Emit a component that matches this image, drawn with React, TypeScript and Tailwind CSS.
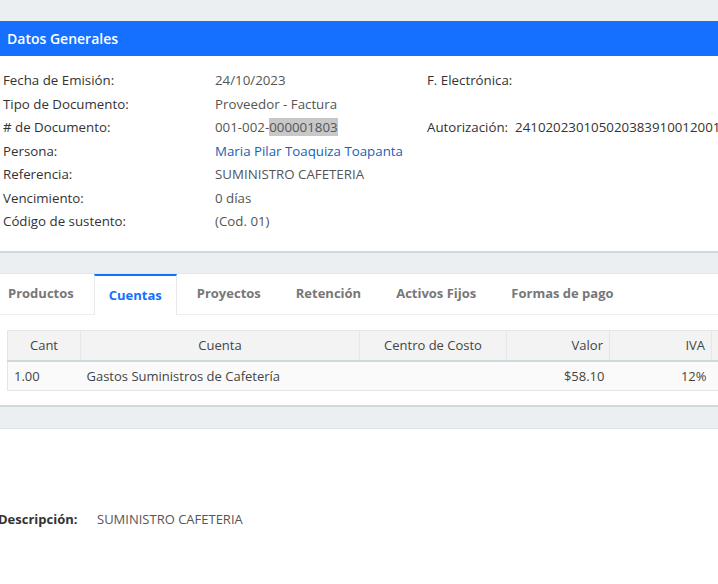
import React from 'react';

const rows: { label: string; value: React.ReactNode; extra?: React.ReactNode }[] = [
  { label: 'Fecha de Emisión:', value: '24/10/2023', extra: <span className="text-[#333]">F. Electrónica:</span> },
  { label: 'Tipo de Documento:', value: 'Proveedor - Factura' },
  {
    label: '# de Documento:',
    value: (
      <span>
        001-002-<span className="bg-[#c8c8c8]">000001803</span>
      </span>
    ),
    extra: (
      <span className="text-[#333]">
        Autorización:<span className="ml-[7px]">2410202301050203839100120010020000018031234567811</span>
      </span>
    ),
  },
  { label: 'Persona:', value: <span className="text-[#1a5fb4]">Maria Pilar Toaquiza Toapanta</span> },
  { label: 'Referencia:', value: 'SUMINISTRO CAFETERIA' },
  { label: 'Vencimiento:', value: '0 días' },
  { label: 'Código de sustento:', value: '(Cod. 01)' },
];

const tabs = ['Productos', 'Cuentas', 'Proyectos', 'Retención', 'Activos Fijos', 'Formas de pago'];

const App: React.FC = () => {
  return (
    <div className="w-[718px] h-[584px] overflow-hidden bg-white font-['Open_Sans',sans-serif] text-[13px] text-[#555]">
      <div className="h-[21px] bg-[#eceff1]" />
      <div className="h-[35px] bg-[#1570ff] px-[7px] flex items-center text-white font-semibold text-[14px]">
        Datos Generales
      </div>

      <div className="pt-[13px] pb-[17px] pl-[3px] grid grid-cols-[212px_212px_1fr] text-[13.3px] leading-[23.5px] whitespace-nowrap">
        {rows.map((r) => (
          <React.Fragment key={r.label}>
            <div className="text-[#333]">{r.label}</div>
            <div>{r.value}</div>
            <div>{r.extra}</div>
          </React.Fragment>
        ))}
      </div>

      <div className="h-[23px] bg-[#eceff1] border-t-2 border-[#cfd8dc] border-b border-b-[#e3e7ea]" />

      <div className="flex ml-[-7px] border-b border-[#eceff1] h-[41px] whitespace-nowrap">
        {tabs.map((t) => {
          const active = t === 'Cuentas';
          return (
            <div
              key={t}
              className={
                active
                  ? 'px-[14px] mr-[5px] pt-[1px] flex items-center font-bold text-[#1570ff] bg-white border-x border-[#e6eaec] border-t-2 border-t-[#1570ff] mb-[-1px]'
                  : 'px-[14px] mr-[5px] pt-[1px] flex items-center font-bold text-[#777] border-x border-transparent'
              }
            >
              {t}
            </div>
          );
        })}
      </div>

      <div className="pl-[7px] pt-[15px]">
        <table className="table-fixed border-collapse w-[780px] text-[13px]">
          <colgroup>
            <col className="w-[73px]" />
            <col className="w-[279px]" />
            <col className="w-[147px]" />
            <col className="w-[103px]" />
            <col className="w-[102px]" />
            <col className="w-[76px]" />
          </colgroup>
          <thead>
            <tr className="h-[31px] bg-[#f3f3f3] text-[#444]">
              <th className="font-normal text-center border border-[#e3e7ea] border-b-2 border-b-[#cfd8dc]">Cant</th>
              <th className="font-normal text-center border border-[#e3e7ea] border-b-2 border-b-[#cfd8dc]">Cuenta</th>
              <th className="font-normal text-center border border-[#e3e7ea] border-b-2 border-b-[#cfd8dc]">Centro de Costo</th>
              <th className="font-normal text-right pr-[6px] border border-[#e3e7ea] border-b-2 border-b-[#cfd8dc]">Valor</th>
              <th className="font-normal text-right pr-[6px] border border-[#e3e7ea] border-b-2 border-b-[#cfd8dc]">IVA</th>
              <th className="font-normal border border-[#e3e7ea] border-b-2 border-b-[#cfd8dc]" />
            </tr>
          </thead>
          <tbody>
            <tr className="h-[29px] bg-[#fafafa] text-[#444]">
              <td className="pl-[6px] pt-[1px] border-l border-b border-[#e3e7ea]">1.00</td>
              <td className="pl-[6px] pt-[1px] border-b border-[#e3e7ea]">Gastos Suministros de Cafetería</td>
              <td className="border-b border-[#e3e7ea]" />
              <td className="text-right pr-[5px] pt-[1px] border-b border-[#e3e7ea]">$58.10</td>
              <td className="text-right pr-[5px] pt-[1px] border-b border-[#e3e7ea]">12%</td>
              <td className="border-b border-[#e3e7ea]" />
            </tr>
          </tbody>
        </table>
      </div>

      <div className="mt-[14px] h-[24px] bg-[#eceff1] border-t-2 border-[#cfd8dc] border-b border-b-[#dfe4e6]" />

      <div className="mt-[79px] ml-[-2px] flex items-center whitespace-nowrap leading-[22px]">
        <span className="w-[99px] font-bold text-[#333]">Descripción:</span>
        <span className="text-[#555]">SUMINISTRO CAFETERIA</span>
      </div>
    </div>
  );
};

export default App;
